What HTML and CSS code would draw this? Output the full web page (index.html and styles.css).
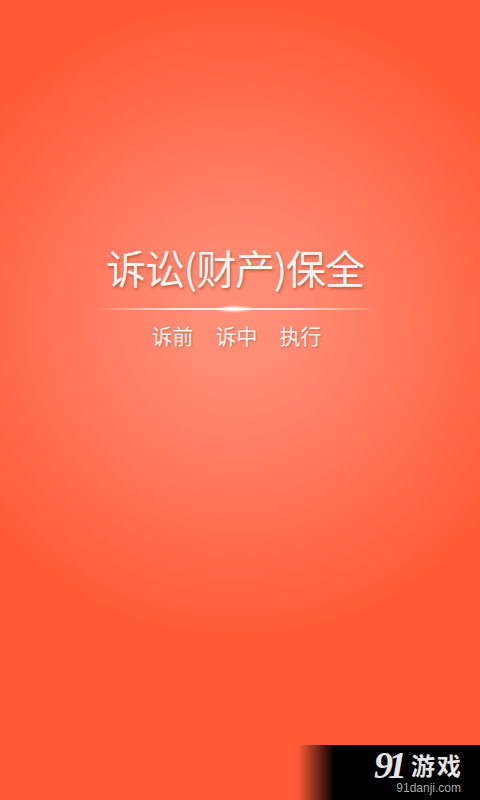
FILE: index.html
```html
<!DOCTYPE html>
<html lang="zh-CN">

<head>
    <meta charset="UTF-8">
    <title>诉讼(财产)保全</title>
    <link rel="stylesheet" href="styles.css">
</head>

<body>
    <div class="splash">
        <div class="title-block">
            <h1 class="title">诉讼(财产)保全</h1>
            <div class="divider"><span class="divider-glow"></span></div>
            <div class="tags">
                <span>诉前</span>
                <span>诉中</span>
                <span>执行</span>
            </div>
        </div>
    </div>

    <!-- Watermark -->
    <div class="watermark">
        <div class="wm-logo">
            <span class="wm-num">91</span>
            <span class="wm-name">游戏</span>
        </div>
        <div class="wm-url">91danji.com</div>
    </div>
</body>

</html>
```

FILE: styles.css
```css
* {
    margin: 0;
    padding: 0;
    box-sizing: border-box;
}

html,
body {
    width: 480px;
    height: 800px;
    overflow: hidden;
    font-family: "Noto Sans CJK SC", "Liberation Sans", sans-serif;
}

body {
    position: relative;
}

.splash {
    width: 480px;
    height: 800px;
    padding: 242px 6px 0 0;
    background: radial-gradient(circle 320px at 237px 320px, #ff9079 0%, #ff8a71 20%, #ff7d62 42%, #ff6f50 65%, #ff6341 84%, #ff5a36 100%);
}

.title-block {
    display: flex;
    flex-direction: column;
    align-items: center;
}

.title {
    height: 50px;
    margin-right: 4px;
    font-size: 40px;
    line-height: 50px;
    font-weight: 400;
    color: rgba(255, 255, 255, 0.94);
    white-space: nowrap;
    letter-spacing: -1.2px;
    text-shadow: 1px 2px 3px rgba(120, 40, 20, 0.45);
}

.divider {
    position: relative;
    width: 284px;
    height: 2px;
    margin-top: 16px;
    background: linear-gradient(to right, rgba(255, 255, 255, 0), rgba(255, 255, 255, 0.8) 30%, rgba(255, 255, 255, 0.8) 70%, rgba(255, 255, 255, 0));
}

.divider-glow {
    position: absolute;
    left: 118px;
    top: -3px;
    width: 42px;
    height: 8px;
    border-radius: 50%;
    background: radial-gradient(ellipse closest-side, rgba(255, 255, 255, 0.85) 25%, rgba(255, 255, 255, 0));
}

.tags {
    display: flex;
    gap: 22px;
    margin-top: 10px;
    margin-right: 1px;
    font-size: 21px;
    line-height: 30px;
    font-weight: 400;
    color: rgba(255, 255, 255, 0.94);
    text-shadow: 1px 1px 2px rgba(120, 40, 20, 0.35);
}

/* Watermark */

.watermark {
    position: absolute;
    right: 0;
    bottom: 0;
    width: 182px;
    height: 55px;
    padding: 6px 19px 0 0;
    background: linear-gradient(to right, rgba(0, 0, 0, 0), #000 20%);
    text-align: right;
}

.wm-logo {
    display: flex;
    justify-content: flex-end;
    align-items: center;
    height: 28px;
    color: #e4e4e4;
}

.wm-num {
    font-family: "Liberation Serif", serif;
    font-style: italic;
    font-size: 38px;
    font-weight: bold;
    line-height: 28px;
    letter-spacing: -5px;
    margin-right: 9px;
}

.wm-name {
    font-size: 24px;
    font-weight: 700;
    line-height: 28px;
    letter-spacing: 2px;
    margin-right: -2px;
}

.wm-url {
    font-family: "Liberation Sans", sans-serif;
    font-size: 12px;
    line-height: 14px;
    margin-top: 2px;
    color: #a8a8a8;
}
```
